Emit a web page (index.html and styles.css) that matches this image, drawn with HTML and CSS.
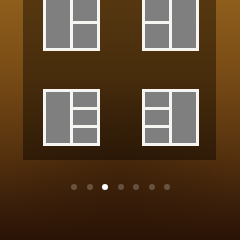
FILE: index.html
```html
<!DOCTYPE html>
<html>
<head>
<meta charset="utf-8">
<link rel="stylesheet" href="styles.css">
</head>
<body>
<div class="screen">
  <div class="panel">
    <div class="grid">
      <div class="layout rows2">
        <div class="cell tall left"></div>
        <div class="cell"></div>
        <div class="cell"></div>
      </div>
      <div class="layout rows2">
        <div class="cell tall right"></div>
        <div class="cell"></div>
        <div class="cell"></div>
      </div>
      <div class="layout rows3">
        <div class="cell tall left"></div>
        <div class="cell"></div>
        <div class="cell"></div>
        <div class="cell"></div>
      </div>
      <div class="layout rows3">
        <div class="cell tall right"></div>
        <div class="cell"></div>
        <div class="cell"></div>
        <div class="cell"></div>
      </div>
    </div>
  </div>
  <div class="dots">
    <span class="dot"></span>
    <span class="dot"></span>
    <span class="dot active"></span>
    <span class="dot"></span>
    <span class="dot"></span>
    <span class="dot"></span>
    <span class="dot"></span>
  </div>
</div>
</body>
</html>
```
FILE: styles.css
```css
html, body {
  margin: 0;
  padding: 0;
}
body {
  width: 240px;
  height: 240px;
  overflow: hidden;
  background:
    radial-gradient(ellipse 110px 90px at 50% 72%, rgba(30, 12, 0, 0.25), rgba(30, 12, 0, 0)),
    linear-gradient(to bottom, #8e5e1c 0px, #7a4d16 70px, #55310e 155px, #3c200a 200px, #2a1305 240px);
}
.screen {
  width: 240px;
  height: 240px;
  display: flex;
  flex-direction: column;
}
.panel {
  margin-left: 23px;
  width: 193px;
  height: 160px;
  overflow: hidden;
  background: rgba(0, 0, 0, 0.4);
}
.grid {
  margin-top: -6px;
  padding-left: 20px;
  display: grid;
  grid-template-columns: 57px 57px;
  column-gap: 42px;
  row-gap: 38px;
}
.layout {
  width: 57px;
  height: 57px;
  box-sizing: border-box;
  padding: 3px;
  background: #f7f5f2;
  display: grid;
  grid-template-columns: 1fr 1fr;
  gap: 3px;
}
.rows2 {
  grid-template-rows: repeat(2, 1fr);
}
.rows3 {
  grid-template-rows: repeat(3, 1fr);
}
.cell {
  background: #7f7f7f;
}
.rows2 .tall {
  grid-row: 1 / 3;
}
.rows3 .tall {
  grid-row: 1 / 4;
}
.tall.left {
  grid-column: 1;
}
.tall.right {
  grid-column: 2;
}
.dots {
  margin-top: 24px;
  display: flex;
  justify-content: center;
  gap: 9.5px;
  padding-left: 1px;
}
.dot {
  width: 6px;
  height: 6px;
  border-radius: 50%;
  background: rgba(255, 255, 255, 0.22);
}
.dot.active {
  background: #ffffff;
}
```
